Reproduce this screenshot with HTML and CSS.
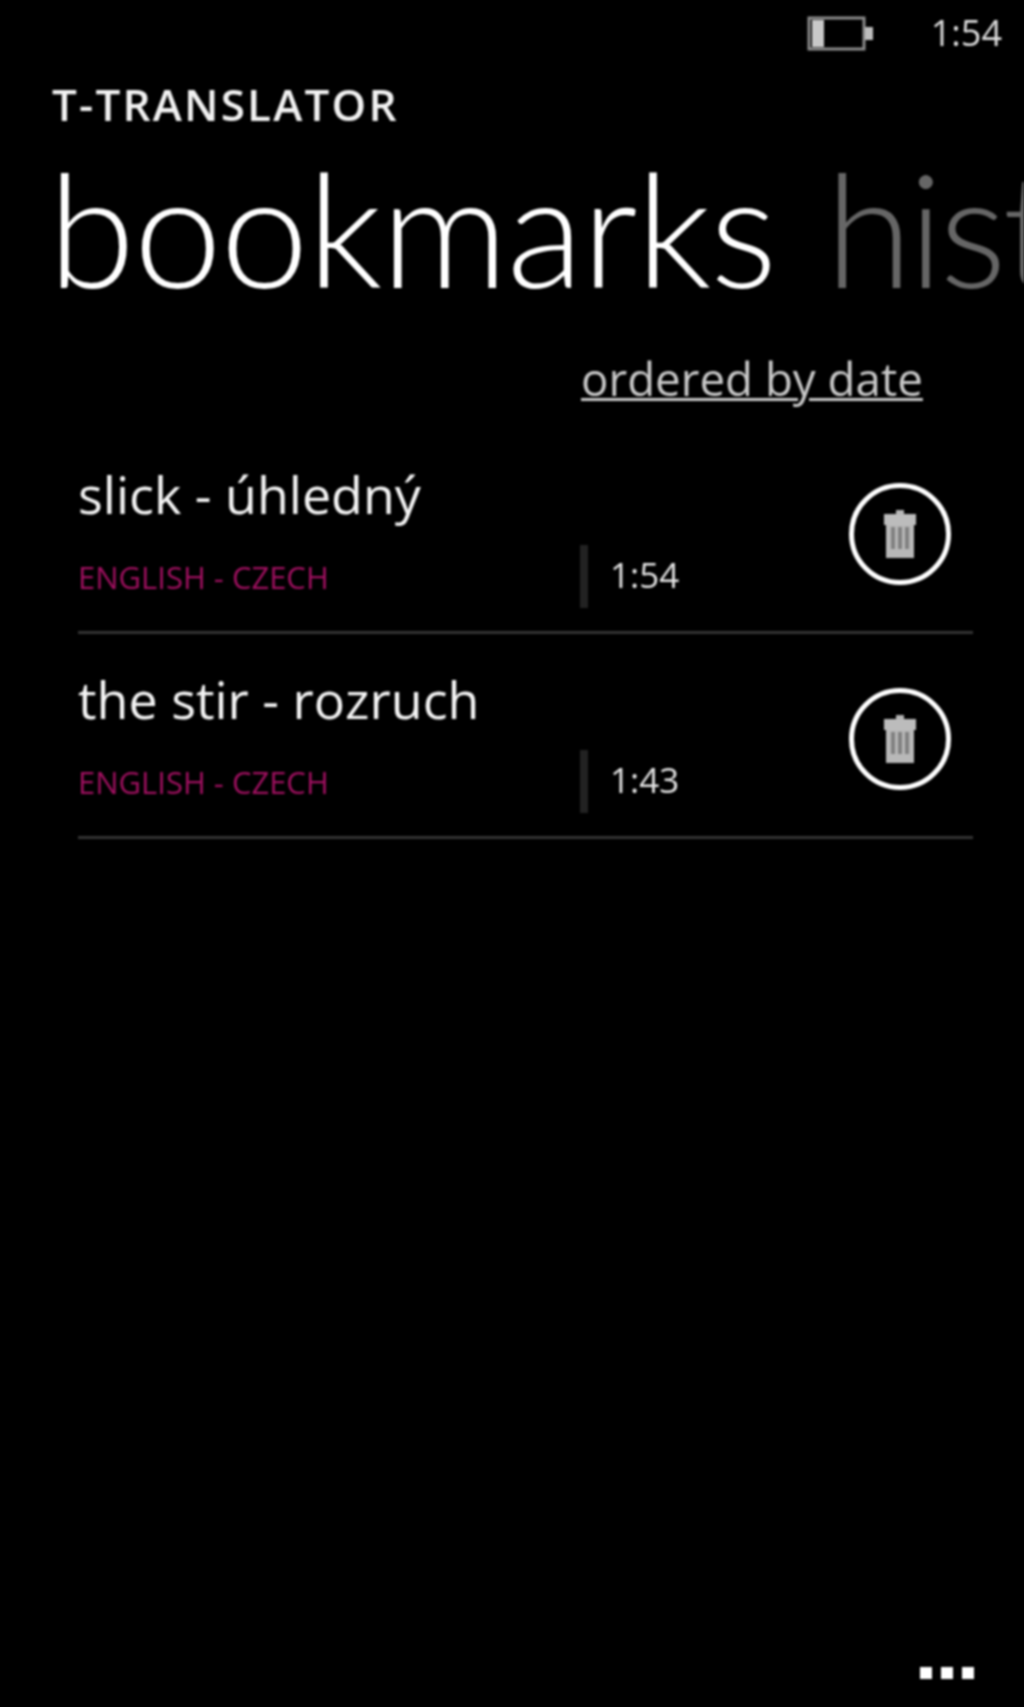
FILE: index.html
```html
<!DOCTYPE html>
<html lang="en">
<head>
    <meta charset="UTF-8">
    <title>T-Translator</title>
    <link rel="stylesheet" href="styles.css">
</head>
<body>
    <div class="phone">
        <div class="status">
            <svg class="battery" width="67" height="36" viewBox="0 0 67 36">
                <rect x="2" y="2" width="55" height="31" fill="none" stroke="#8c8c8c" stroke-width="3"/>
                <rect x="5" y="4" width="12" height="27" fill="#c8c8c8"/>
                <rect x="58" y="11" width="8" height="13" fill="#bdbdbd"/>
            </svg>
            <span class="clock">1:54</span>
        </div>

        <div class="app-name">T-TRANSLATOR</div>
        <div class="pivot"><span>bookmarks</span> <span class="pivot-next">hist</span></div>

        <div class="order"><span class="order-link">ordered by date</span></div>

        <ul class="list">
            <li class="row">
                <div class="row-text">
                    <div class="word">slick - úhledný</div>
                    <div class="meta">
                        <span class="lang">ENGLISH - CZECH</span>
                        <span class="time">1:54</span>
                    </div>
                </div>
                <div class="trash">
                    <svg width="36" height="48" viewBox="0 0 36 48">
                        <path d="M14 0h8v4h-8z" fill="#b4b4b4"/>
                        <path d="M2 4h32v11H2z" fill="#bcbcbc"/>
                        <path d="M4 15h28v33H4z" fill="#b8b8b8"/>
                        <path d="M9 17h4v22H9zM16 17h4v22h-4zM23 17h4v22h-4z" fill="#808080"/>
                    </svg>
                </div>
            </li>
            <li class="row">
                <div class="row-text">
                    <div class="word">the stir - rozruch</div>
                    <div class="meta">
                        <span class="lang">ENGLISH - CZECH</span>
                        <span class="time">1:43</span>
                    </div>
                </div>
                <div class="trash">
                    <svg width="36" height="48" viewBox="0 0 36 48">
                        <path d="M14 0h8v4h-8z" fill="#b4b4b4"/>
                        <path d="M2 4h32v11H2z" fill="#bcbcbc"/>
                        <path d="M4 15h28v33H4z" fill="#b8b8b8"/>
                        <path d="M9 17h4v22H9zM16 17h4v22h-4zM23 17h4v22h-4z" fill="#808080"/>
                    </svg>
                </div>
            </li>
        </ul>

        <div class="appbar">
            <i></i><i></i><i></i>
        </div>
    </div>
</body>
</html>
```

FILE: styles.css
```css
* {
    margin: 0;
    padding: 0;
    list-style: none;
    box-sizing: border-box;
}

html, body {
    background: #000;
}

.phone {
    width: 1024px;
    height: 1707px;
    overflow: hidden;
    display: flex;
    flex-direction: column;
    color: #fff;
    font-family: "Open Sans", "Liberation Sans", sans-serif;
    filter: blur(1px);
}

.status {
    height: 66px;
    padding: 16px 22px 0 0;
    display: flex;
    justify-content: flex-end;
    align-items: flex-start;
}

.battery {
    margin-right: 57px;
}

.clock {
    font-size: 36px;
    line-height: 34px;
    color: #ddd;
}

.app-name {
    margin: 14px 0 0 52px;
    font-size: 44px;
    line-height: 48px;
    font-weight: 600;
    letter-spacing: 2.2px;
    color: #f2f2f2;
}

.pivot {
    margin: 11px 0 0 48px;
    font-family: "Lato", "Open Sans", sans-serif;
    font-size: 158px;
    line-height: 176px;
    font-weight: 300;
    letter-spacing: -1.4px;
    white-space: nowrap;
}

.pivot-next {
    margin-left: 8px;
    color: #666;
    letter-spacing: -4px;
}

.order {
    height: 114px;
    padding: 39px 0 0 581px;
}

.order-link {
    font-size: 45.7px;
    line-height: 48px;
    color: #c8c8c8;
    text-decoration: underline;
    text-decoration-thickness: 3px;
}

.list {
    margin: 0 51px 0 78px;
}

.row {
    height: 205px;
    padding-top: 12px;
    display: flex;
    align-items: center;
    border-bottom: 3px solid #333;
}

.row-text {
    flex: 1;
}

.word {
    font-size: 52px;
    line-height: 60px;
    color: #f4f4f4;
}

.meta {
    margin-top: 21px;
    display: flex;
    align-items: center;
}

.lang {
    width: 502px;
    font-size: 31px;
    color: #a01060;
}

.time {
    height: 63px;
    padding-left: 22px;
    border-left: 8px solid #222;
    font-size: 35px;
    line-height: 60px;
    color: #e4e4e4;
}

.trash {
    width: 102px;
    height: 102px;
    margin: -5px 22px 0 0;
    border: 5px solid #fff;
    border-radius: 50%;
    display: flex;
    align-items: center;
    justify-content: center;
}

.appbar {
    margin-top: auto;
    height: 68px;
    padding: 28px 50px 0 0;
    display: flex;
    justify-content: flex-end;
    gap: 9px;
}

.appbar i {
    width: 12px;
    height: 12px;
    background: #fff;
}
```
